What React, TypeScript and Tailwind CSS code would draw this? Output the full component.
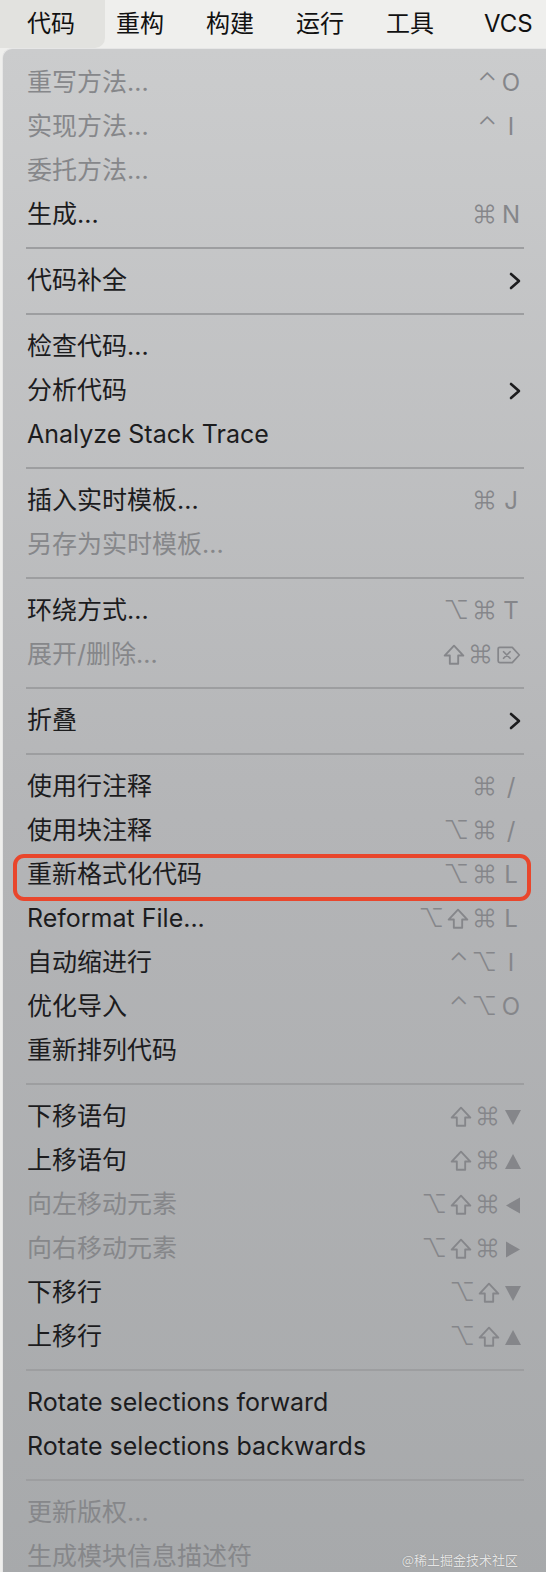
import React from "react";

type Item =
  | { sep: true }
  | { label: string; keys?: string[]; sub?: boolean; off?: boolean; hl?: boolean };

const ITEMS: Item[] = [
  { label: "重写方法...", keys: ["⌃", "O"], off: true },
  { label: "实现方法...", keys: ["⌃", "I"], off: true },
  { label: "委托方法...", off: true },
  { label: "生成...", keys: ["⌘", "N"] },
  { sep: true },
  { label: "代码补全", sub: true },
  { sep: true },
  { label: "检查代码..." },
  { label: "分析代码", sub: true },
  { label: "Analyze Stack Trace" },
  { sep: true },
  { label: "插入实时模板...", keys: ["⌘", "J"] },
  { label: "另存为实时模板...", off: true },
  { sep: true },
  { label: "环绕方式...", keys: ["⌥", "⌘", "T"] },
  { label: "展开/删除...", keys: ["⇧", "⌘", "⌦"], off: true },
  { sep: true },
  { label: "折叠", sub: true },
  { sep: true },
  { label: "使用行注释", keys: ["⌘", "/"] },
  { label: "使用块注释", keys: ["⌥", "⌘", "/"] },
  { label: "重新格式化代码", keys: ["⌥", "⌘", "L"], hl: true },
  { label: "Reformat File...", keys: ["⌥", "⇧", "⌘", "L"] },
  { label: "自动缩进行", keys: ["⌃", "⌥", "I"] },
  { label: "优化导入", keys: ["⌃", "⌥", "O"] },
  { label: "重新排列代码" },
  { sep: true },
  { label: "下移语句", keys: ["⇧", "⌘", "▼"] },
  { label: "上移语句", keys: ["⇧", "⌘", "▲"] },
  { label: "向左移动元素", keys: ["⌥", "⇧", "⌘", "◀"], off: true },
  { label: "向右移动元素", keys: ["⌥", "⇧", "⌘", "▶"], off: true },
  { label: "下移行", keys: ["⌥", "⇧", "▼"] },
  { label: "上移行", keys: ["⌥", "⇧", "▲"] },
  { sep: true },
  { label: "Rotate selections forward" },
  { label: "Rotate selections backwards" },
  { sep: true },
  { label: "更新版权...", off: true },
  { label: "生成模块信息描述符", off: true },
];

const MENUS = ["代码", "重构", "构建", "运行", "工具", "VCS"];

const FONT = "font-['Inter','Noto_Sans_CJK_SC',sans-serif]";

const TRI: Record<string, string> = {
  "▼": "M1 2 H17 L9 17 Z",
  "▲": "M1 17 H17 L9 2 Z",
  "◀": "M16 1.5 V17.5 L2 9.5 Z",
  "▶": "M2 1.5 V17.5 L16 9.5 Z",
};

function Chevron() {
  return (
    <svg width="14" height="20" viewBox="0 0 14 20" className="mr-[-4px]">
      <path d="M3 3 L11 10 L3 17" fill="none" stroke="#1c1c1e" strokeWidth="2.6" strokeLinecap="round" strokeLinejoin="round" />
    </svg>
  );
}

// shift key outline arrow
function ShiftIcon() {
  return (
    <svg width="22" height="22" viewBox="0 0 20 20" className="shrink-0">
      <path d="M10 1.5 L18.5 10.5 L13.8 10.5 L13.8 18 L6.2 18 L6.2 10.5 L1.5 10.5 Z" fill="none" stroke="currentColor" strokeWidth="1.7" strokeLinejoin="round" />
    </svg>
  );
}

// forward delete key
function DelIcon() {
  return (
    <svg width="26" height="22" viewBox="0 0 24 20" className="shrink-0">
      <path d="M3.5 3 H15 L21.5 10 L15 17 H3.5 Q2 17 2 15.5 V4.5 Q2 3 3.5 3 Z" fill="none" stroke="currentColor" strokeWidth="1.6" strokeLinejoin="round" />
      <path d="M7 7 L13 13 M13 7 L7 13" stroke="currentColor" strokeWidth="1.6" strokeLinecap="round" />
    </svg>
  );
}

function keyNode(k: string) {
  if (k === "⇧") return <ShiftIcon />;
  if (k === "⌦") return <DelIcon />;
  if (TRI[k])
    return (
      <svg width="18" height="19" viewBox="0 0 18 19" className="shrink-0 ml-[1px]">
        <path d={TRI[k]} fill="currentColor" />
      </svg>
    );
  let cls = "text-[25px] font-light";
  if (/[A-Z\/]/.test(k)) cls = "font-['Inter',sans-serif] text-[24px] w-[22px] text-center";
  return <span className={cls}>{k}</span>;
}

function Keys({ keys }: { keys: string[] }) {
  return (
    <div className="flex shrink-0 items-center gap-[3px] text-[#85868a] font-['DejaVu_Sans','Inter',sans-serif] mr-[-4px]">
      {keys.map((k, i) => (
        <React.Fragment key={i}>{keyNode(k)}</React.Fragment>
      ))}
    </div>
  );
}

function Row({ item }: { item: Exclude<Item, { sep: true }> }) {
  return (
    <div className="relative h-[44px] flex items-center justify-between pl-[24px] pr-[28px]">
      {item.hl && (
        <div className="absolute left-[10px] right-[15px] top-[1px] bottom-[-4px] rounded-[11px] border-[4px] border-[#e9462c]" />
      )}
      <span className={`text-[25px] whitespace-nowrap ${item.off ? "text-[#86878a]" : "text-[#1c1c1e]"}`}>{item.label}</span>
      {item.keys && <Keys keys={item.keys} />}
      {item.sub && <Chevron />}
    </div>
  );
}

export default function App() {
  return (
    <div className={`w-[546px] h-[1572px] overflow-hidden flex flex-col bg-[#efefed] ${FONT}`}>
      <div className="h-[48px] shrink-0 flex items-center text-[24px] text-[#111] whitespace-nowrap">
        {MENUS.map((m, i) => (
          <div
            key={m}
            className={`h-full shrink-0 flex items-center ${
              i === 0
                ? "w-[105px] pl-[27px] bg-[#e2e2df] rounded-br-[10px]"
                : i === 5
                ? "pl-[19px]"
                : "w-[90px] pl-[11px]"
            }`}
          >
            {m}
          </div>
        ))}
      </div>
      <div className="relative flex-1 ml-[2px] rounded-tl-[10px] border-t border-l border-[#e6e6e6] bg-gradient-to-b from-[#cbcccd] via-[#b4b5b7] to-[#a7a9ab] pt-[12px]">
        {ITEMS.map((it, i) =>
          "sep" in it ? (
            <div key={i} className="h-[22px] flex items-center pl-[23px] pr-[22px]">
              <div className="h-[2px] w-full bg-[#9d9ea0]" />
            </div>
          ) : (
            <Row key={i} item={it} />
          )
        )}
        <div className="absolute right-[28px] bottom-[10px] text-[13px] text-[#e4e4e4] font-['Noto_Sans_CJK_SC',sans-serif] [text-shadow:0_0_1px_#777]">
          @稀土掘金技术社区
        </div>
      </div>
    </div>
  );
}
